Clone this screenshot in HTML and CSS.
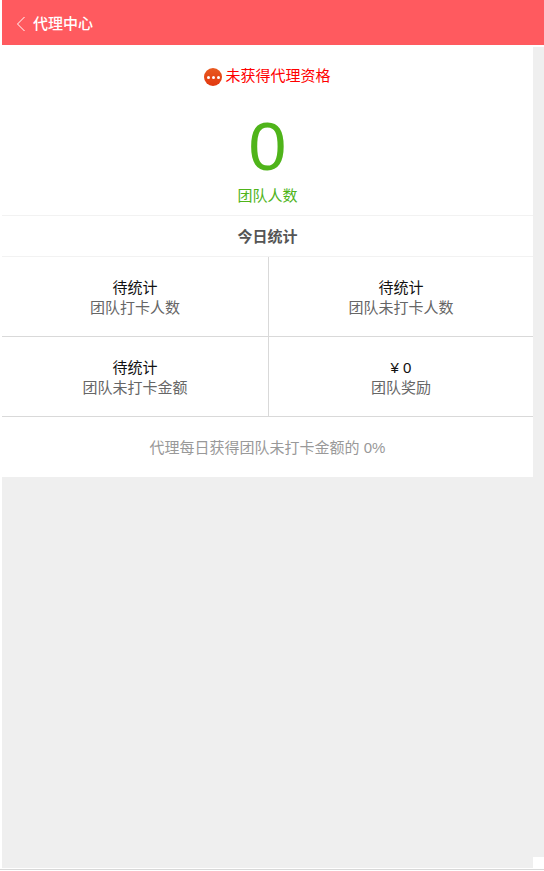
FILE: index.html
```html
<!DOCTYPE html>
<html lang="zh-CN">
<head>
    <meta charset="UTF-8">
    <meta name="viewport" content="width=device-width, initial-scale=1.0">
    <title>代理中心</title>
    <link rel="stylesheet" href="styles.css">
</head>
<body>
    <div class="top-bar">
        <svg class="back-icon" width="10" height="16" viewBox="0 0 10 16"><path d="M8.5 1 L1.5 8 L8.5 15" fill="none" stroke="#fff" stroke-width="1"/></svg>
        <span>代理中心</span>
    </div>
    <div class="page">
        <div class="main">
            <div class="panel">
                <div class="status">
                    <span class="status-icon"><i></i><i></i><i></i></span>
                    <span class="status-text">未获得代理资格</span>
                </div>
                <div class="team-count">0</div>
                <div class="team-label">团队人数</div>
                <div class="today-title">今日统计</div>
                <div class="stats">
                    <div class="stat">
                        <div class="stat-value">待统计</div>
                        <div class="stat-name">团队打卡人数</div>
                    </div>
                    <div class="stat">
                        <div class="stat-value">待统计</div>
                        <div class="stat-name">团队未打卡人数</div>
                    </div>
                    <div class="stat">
                        <div class="stat-value">待统计</div>
                        <div class="stat-name">团队未打卡金额</div>
                    </div>
                    <div class="stat">
                        <div class="stat-value">¥ 0</div>
                        <div class="stat-name">团队奖励</div>
                    </div>
                </div>
                <div class="note">代理每日获得团队未打卡金额的 0%</div>
            </div>
        </div>
        <div class="side">
            <div class="side-fill"></div>
        </div>
    </div>
    <div class="bottom-line"></div>
</body>
</html>
```

FILE: styles.css
```css
html, body {
    margin: 0;
    padding: 0;
    height: 100%;
    overflow: hidden;
}
body {
    background-color: #fff;
    font-family: "Liberation Sans", "Noto Sans CJK SC", sans-serif;
    font-size: 15px;
}
.top-bar {
    display: flex;
    align-items: center;
    gap: 7px;
    height: 45px;
    margin-left: 2px;
    padding-left: 14px;
    background-color: #ff5a5f;
    color: #fff;
    font-weight: 500;
}
.back-icon {
    margin-top: 3px;
}
.page {
    display: flex;
    height: 823px;
    margin-left: 2px;
}
.main {
    width: 531px;
    background-color: #efefef;
}
.side {
    width: 11px;
}
.side-fill {
    height: 810px;
    margin-top: 2px;
    background-color: #efefef;
}
.panel {
    background-color: #fff;
    text-align: center;
}
.status {
    display: flex;
    justify-content: center;
    align-items: center;
    gap: 3px;
    height: 61px;
    color: #f00;
}
.status-text {
    padding-bottom: 3px;
}
.status-icon {
    display: flex;
    justify-content: center;
    align-items: center;
    gap: 2px;
    width: 18px;
    height: 18px;
    margin-top: 3px;
    border-radius: 50%;
    background: linear-gradient(#e85a20, #e2380f);
}
.status-icon i {
    width: 3px;
    height: 3px;
    background-color: #fff;
    border-radius: 50%;
}
.team-count {
    padding-top: 4px;
    margin-bottom: 3px;
    font-size: 68px;
    line-height: 72px;
    color: #4fb41a;
}
.team-label {
    padding-bottom: 8px;
    line-height: 22px;
    color: #4fb41a;
}
.today-title {
    height: 40px;
    line-height: 42px;
    border-top: 1px solid #f2f2f2;
    border-bottom: 1px solid #f2f2f2;
    color: #555;
    font-weight: 700;
}
.stats {
    display: grid;
    grid-template-columns: 267px 1fr;
}
.stat {
    display: flex;
    flex-direction: column;
    justify-content: center;
    height: 77px;
    padding-top: 2px;
    border-bottom: 1px solid #d9d9d9;
    line-height: 20px;
}
.stat:nth-child(odd) {
    border-right: 1px solid #d9d9d9;
}
.stat-value {
    color: #111;
}
.stat-name {
    color: #666;
}
.note {
    height: 60px;
    line-height: 62px;
    color: #999;
}
.bottom-line {
    height: 1px;
    margin-top: 1px;
    background-color: #d8d8d8;
}
```
